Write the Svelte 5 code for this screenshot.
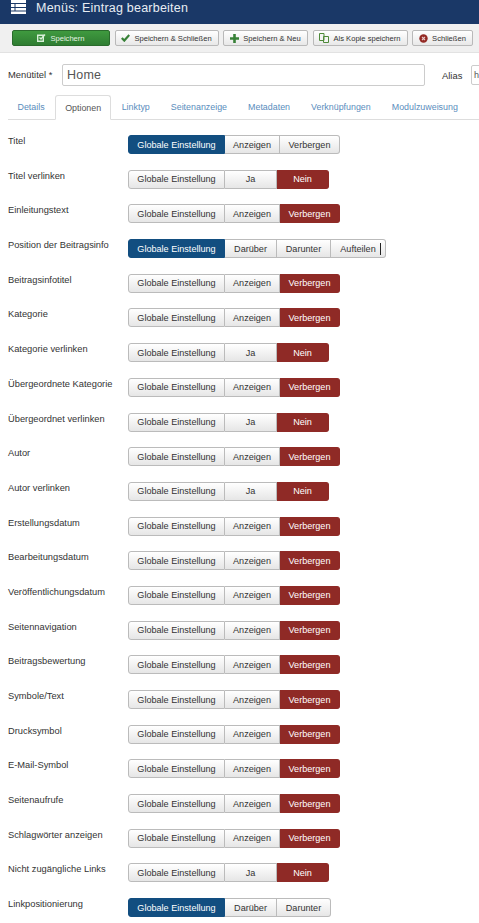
<script>
  const G = 'Globale Einstellung';
  const show = [G, 'Anzeigen', 'Verbergen'];
  const yn = [G, 'Ja', 'Nein'];
  const pos = [G, 'Darüber', 'Darunter', 'Aufteilen'];

  const rows = [
    { label: 'Titel', opts: show, active: 0 },
    { label: 'Titel verlinken', opts: yn, active: 2 },
    { label: 'Einleitungstext', opts: show, active: 2 },
    { label: 'Position der Beitragsinfo', opts: pos, active: 0, caret: true },
    { label: 'Beitragsinfotitel', opts: show, active: 2 },
    { label: 'Kategorie', opts: show, active: 2 },
    { label: 'Kategorie verlinken', opts: yn, active: 2 },
    { label: 'Übergeordnete Kategorie', opts: show, active: 2 },
    { label: 'Übergeordnet verlinken', opts: yn, active: 2 },
    { label: 'Autor', opts: show, active: 2 },
    { label: 'Autor verlinken', opts: yn, active: 2 },
    { label: 'Erstellungsdatum', opts: show, active: 2 },
    { label: 'Bearbeitungsdatum', opts: show, active: 2 },
    { label: 'Veröffentlichungsdatum', opts: show, active: 2 },
    { label: 'Seitennavigation', opts: show, active: 2 },
    { label: 'Beitragsbewertung', opts: show, active: 2 },
    { label: 'Symbole/Text', opts: show, active: 2 },
    { label: 'Drucksymbol', opts: show, active: 2 },
    { label: 'E-Mail-Symbol', opts: show, active: 2 },
    { label: 'Seitenaufrufe', opts: show, active: 2 },
    { label: 'Schlagwörter anzeigen', opts: show, active: 2 },
    { label: 'Nicht zugängliche Links', opts: yn, active: 2 },
    { label: 'Linkpositionierung', opts: [G, 'Darüber', 'Darunter'], active: 0 }
  ];

  const tabs = ['Details', 'Optionen', 'Linktyp', 'Seitenanzeige', 'Metadaten', 'Verknüpfungen', 'Modulzuweisung'];

  function widthClass(opt) {
    if (opt === G) return 'w-global';
    if (opt === 'Anzeigen') return 'w-show';
    if (opt === 'Verbergen') return 'w-hide';
    if (opt === 'Darunter') return 'w-below';
    if (opt === 'Aufteilen') return 'w-split';
    return 'w-short';
  }
</script>

<div class="page">
  <header class="topbar">
    <svg class="menu-icon" width="15" height="14" viewBox="0 0 15 14">
      <path d="M0 0h15v14H0z" fill="#fff" />
      <path d="M0 3.500h15M0 7.500h15M0 11h15M4 3.500v7.500" stroke="#1a3867" stroke-width="1" fill="none" />
    </svg>
    <h1>Menüs: Eintrag bearbeiten</h1>
  </header>

  <div class="toolbar">
    <button class="tool save">
      <svg width="9" height="8" viewBox="0 0 9 8"><path d="M.7 1.200h5.600v6H.7z" fill="none" stroke="#d8f0d8" stroke-width="1.400" /><path d="M2.500 3.500l1.500 1.500 4-4.500" fill="none" stroke="#d8f0d8" stroke-width="1.400" /></svg>
      Speichern
    </button>
    <button class="tool t-close">
      <svg width="9" height="8" viewBox="0 0 9 8"><path d="M.8 4l2.500 2.600 5-5.600" fill="none" stroke="#378137" stroke-width="2.200" /></svg>
      Speichern &amp; Schließen
    </button>
    <button class="tool t-new">
      <svg width="9" height="9" viewBox="0 0 9 9"><path d="M4.500 0v9M0 4.500h9" stroke="#378137" stroke-width="2.600" /></svg>
      Speichern &amp; Neu
    </button>
    <button class="tool t-copy">
      <svg width="10" height="10" viewBox="0 0 10 10"><path d="M.5.500h4.500v7H.5zM4.500 3.500h5v6h-5z" fill="#f4f4f4" stroke="#4f8a3a" stroke-width="1" /></svg>
      Als Kopie speichern
    </button>
    <button class="tool t-exit">
      <svg width="9" height="9" viewBox="0 0 9 9"><circle cx="4.500" cy="4.500" r="4.200" fill="#942a25" /><path d="M3 3l3 3M6 3l-3 3" stroke="#e8c8c8" stroke-width="1.100" /></svg>
      Schließen
    </button>
  </div>

  <div class="title-row">
    <span class="title-label">Menütitel *</span>
    <div class="title-input">Home</div>
    <span class="alias-label">Alias</span>
    <div class="alias-input">h</div>
  </div>

  <nav class="tabs">
    {#each tabs as tab}
      <span class="tab" class:current={tab === 'Optionen'}>{tab}</span>
    {/each}
  </nav>

  <section class="options">
    {#each rows as row}
      <div class="row">
        <span class="row-label">{row.label}</span>
        <div class="group">
          {#each row.opts as opt, i}
            <span
              class="opt {widthClass(opt)}"
              class:on-blue={row.active === i && i === 0}
              class:on-red={row.active === i && i > 0}
            >{opt}{#if row.caret && opt === 'Aufteilen'}<i class="caret"></i>{/if}</span>
          {/each}
        </div>
      </div>
    {/each}
  </section>
</div>

<style>
  :global(body) {
    margin: 0;
    background: #fff;
  }

  .page {
    width: 479px;
    height: 923px;
    overflow: hidden;
    font-family: "Liberation Sans", Arial, sans-serif;
    color: #333;
  }

  .topbar {
    height: 24px;
    background: #1a3867;
    display: flex;
    align-items: flex-start;
    padding-left: 11px;
    gap: 10px;
  }

  .menu-icon {
    flex: none;
  }

  h1 {
    margin: 1px 0 0;
    font-size: 12.500px;
    line-height: 15px;
    font-weight: 400;
    color: #e8edf3;
    letter-spacing: 0.220px;
  }

  .toolbar {
    height: 29px;
    box-sizing: border-box;
    background: #f0f0f0;
    border-bottom: 1px solid #e2e2e2;
    display: flex;
    align-items: flex-start;
    padding: 6px 0 0 12px;
    gap: 4.500px;
  }

  .tool {
    height: 16px;
    box-sizing: border-box;
    padding: 0;
    border: 1px solid #b9b9b9;
    border-radius: 2px;
    background: linear-gradient(#fff, #e8e8e8);
    font: 7.600px "Liberation Sans", Arial, sans-serif;
    color: #333;
    white-space: nowrap;
    display: flex;
    align-items: center;
    justify-content: center;
    gap: 4px;
  }

  .save {
    width: 98px;
    background: linear-gradient(#3f9a3f, #2f7d32);
    border-color: #2a6b2c;
    color: #e4f3e4;
  }

  .t-close { width: 104px; }
  .t-new { width: 85px; }
  .t-copy { width: 95px; }
  .t-exit { width: 61px; }

  .title-row {
    display: flex;
    align-items: center;
    height: 22px;
    margin-top: 11px;
    padding-left: 8px;
    font-size: 9.400px;
  }

  .title-label {
    width: 54px;
    flex: none;
    margin-top: -1px;
  }

  .title-input {
    width: 363px;
    height: 22px;
    box-sizing: border-box;
    flex: none;
    border: 1px solid #ccc;
    border-radius: 2px;
    padding-left: 4px;
    font-size: 12.500px;
    line-height: 20px;
    letter-spacing: 0.200px;
    color: #555;
  }

  .alias-label {
    margin-left: 17px;
    width: 29px;
    flex: none;
    font-size: 9.400px;
  }

  .alias-input {
    flex: none;
    width: 20px;
    height: 20px;
    box-sizing: border-box;
    border: 1px solid #ccc;
    border-radius: 2px;
    padding-left: 2px;
    line-height: 18px;
    font-size: 9px;
    color: #555;
  }

  .tabs {
    display: flex;
    align-items: flex-end;
    height: 24px;
    margin-top: 9px;
    margin-left: 8px;
    border-bottom: 1px solid #ddd;
    font-size: 8.900px;
  }

  .tab {
    height: 24px;
    line-height: 14px;
    padding: 5px 10.500px 0;
    color: #5a8dbd;
    white-space: nowrap;
    box-sizing: border-box;
  }

  .tab:first-child {
    padding-left: 9.500px;
  }

  .tab.current {
    height: 25px;
    margin-bottom: -1px;
    background: #fff;
    border: 1px solid #ddd;
    border-bottom-color: #fff;
    border-radius: 3px 3px 0 0;
    color: #555;
    padding: 5px 9px 0;
  }

  .options {
    margin-top: 15px;
    padding-left: 8px;
  }

  .row {
    height: 34.700px;
    display: flex;
    align-items: flex-start;
  }

  .row-label {
    width: 120px;
    flex: none;
    font-size: 9.300px;
    line-height: 14px;
    white-space: nowrap;
    margin-top: -1px;
  }

  .group {
    display: flex;
    height: 19px;
  }

  .opt {
    box-sizing: border-box;
    height: 19px;
    display: flex;
    align-items: center;
    justify-content: center;
    position: relative;
    border: 1px solid #bbb;
    border-left-width: 0;
    background: linear-gradient(#fff, #e6e6e6);
    font-size: 9.100px;
    color: #333;
    white-space: nowrap;
  }

  .opt:first-child {
    border-left-width: 1px;
    border-radius: 3px 0 0 3px;
  }

  .opt:last-child {
    border-radius: 0 3px 3px 0;
  }

  .w-global { width: 97px; }
  .w-show { width: 55px; }
  .w-hide { width: 60px; }
  .w-short { width: 52px; }
  .w-below { width: 54px; }
  .w-split { width: 55px; }

  .on-blue {
    background: #124e80;
    border-color: #124e80;
    color: #fff;
  }

  .on-red {
    background: #8f2a26;
    border-color: #8f2a26;
    color: #fff;
  }

  .caret {
    position: absolute;
    right: 4px;
    top: 3px;
    width: 1px;
    height: 12px;
    background: #222;
  }
</style>
